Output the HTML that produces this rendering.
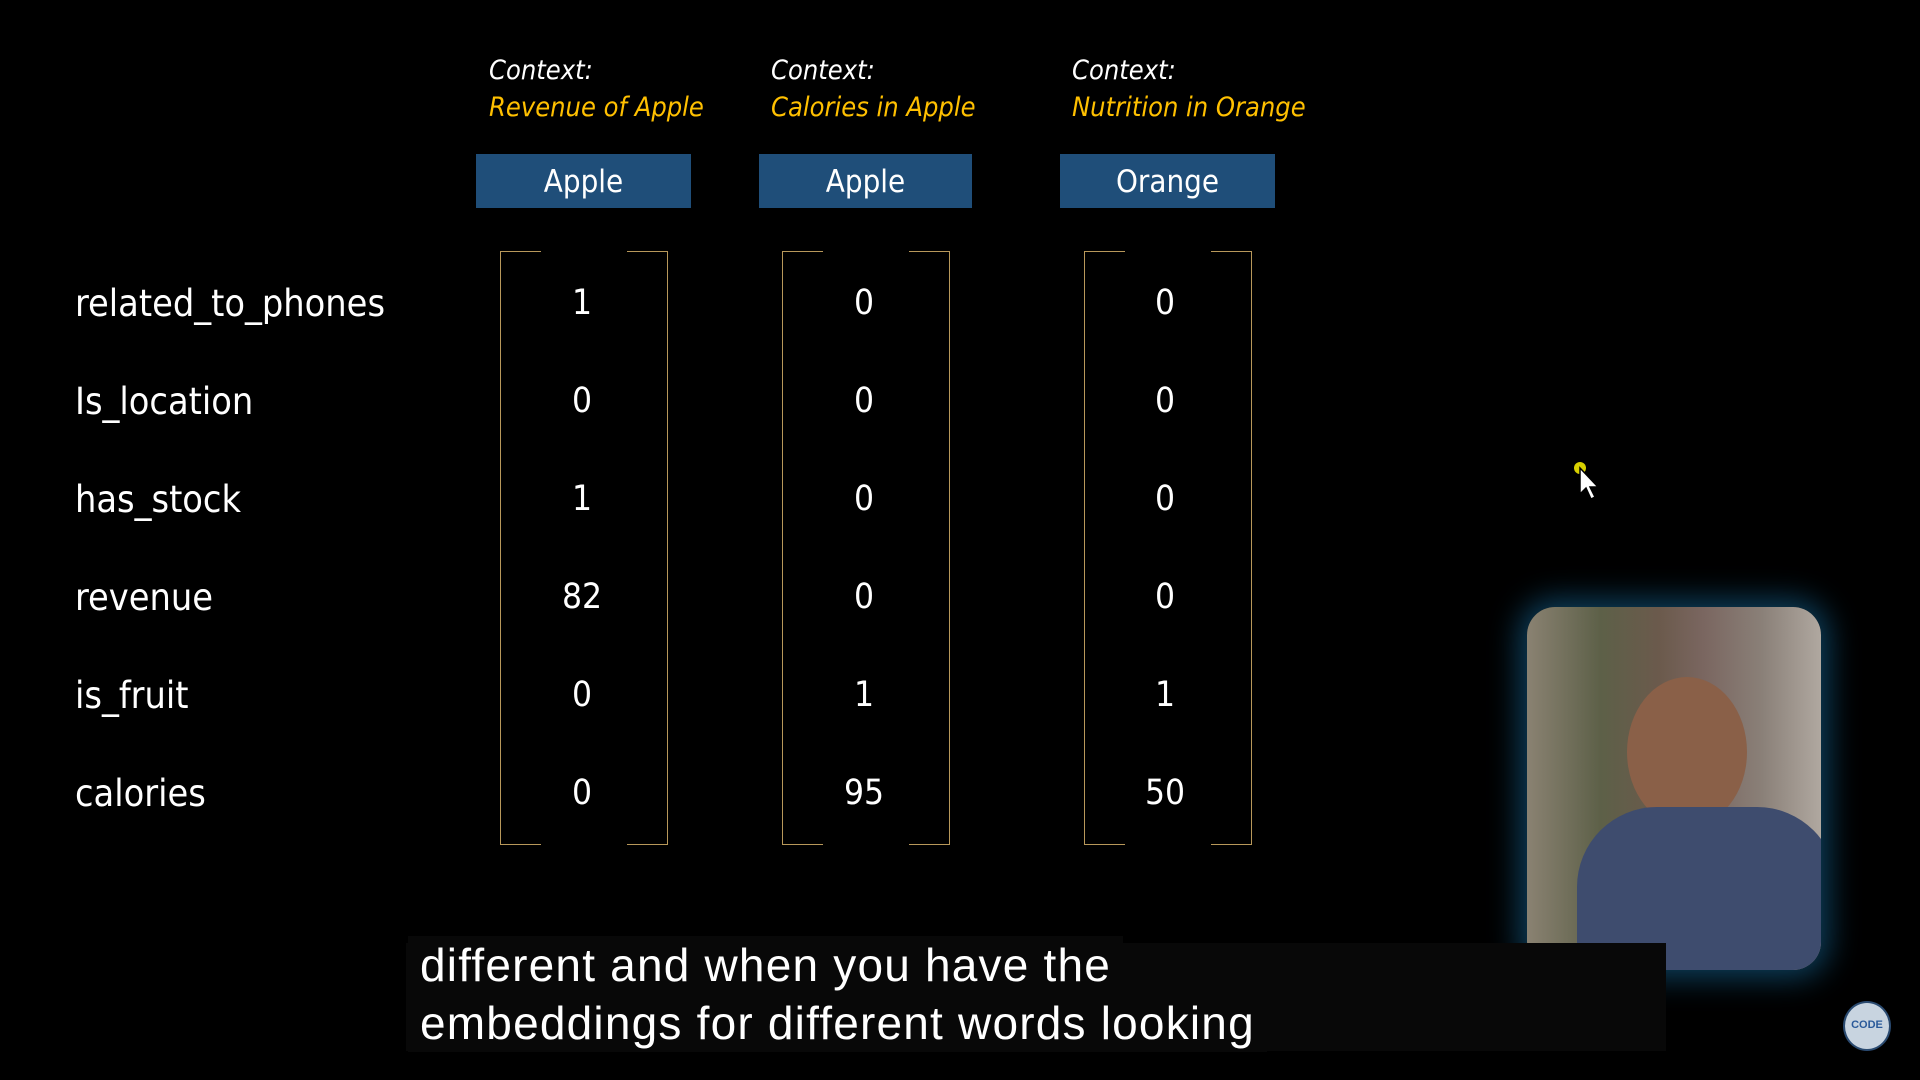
<!DOCTYPE html>
<html><head><meta charset="utf-8"><style>
body{margin:0;width:1920px;height:1080px;background:#000;overflow:hidden;position:relative;font-family:"Liberation Sans",sans-serif;color:#fff}
.a{position:absolute}
.ctx{font-style:italic;font-size:27px;line-height:37px;font-family:"DejaVu Sans Condensed","Liberation Sans",sans-serif}
.ctx span{color:#ffc000}
.box{background:#1f4e79;height:54px;top:154px;font-size:31px;line-height:56px;text-align:center;font-family:"DejaVu Sans Condensed","Liberation Sans",sans-serif}
.lbl{left:75px;font-size:37.5px;font-family:"DejaVu Sans Condensed","Liberation Sans",sans-serif;transform:translateY(-50%)}
.val{font-size:35px;font-family:"DejaVu Sans Condensed","Liberation Sans",sans-serif;transform:translate(-50%,-50%)}
.br{top:251px;height:594px;width:168px;border-left:1.5px solid #b8985a;border-right:1.5px solid #b8985a;box-sizing:border-box}
.br:before,.br:after{content:"";position:absolute;left:0;width:40px;height:0;border-top:1.5px solid #b8985a}
.br:before{top:0}.br:after{bottom:0}
.br i:before,.br i:after{content:"";position:absolute;right:0;width:40px;border-top:1.5px solid #b8985a}
.br i:before{top:0}.br i:after{bottom:0}
.cap{font-size:46px;letter-spacing:1.2px;background:#080808;padding:0 12px;left:408px}
</style></head><body>
<div class="a ctx" style="left:489px;top:52px">Context:<br><span>Revenue of Apple</span></div>
<div class="a ctx" style="left:771px;top:52px">Context:<br><span>Calories in Apple</span></div>
<div class="a ctx" style="left:1072px;top:52px">Context:<br><span>Nutrition in Orange</span></div>
<div class="a box" style="left:476px;width:215px">Apple</div>
<div class="a box" style="left:759px;width:213px">Apple</div>
<div class="a box" style="left:1060px;width:215px">Orange</div>
<div class="a br" style="left:500px"><i></i></div>
<div class="a br" style="left:782px"><i></i></div>
<div class="a br" style="left:1084px"><i></i></div>
<div class="a lbl" style="top:303px">related_to_phones</div>
<div class="a lbl" style="top:401px">Is_location</div>
<div class="a lbl" style="top:499px">has_stock</div>
<div class="a lbl" style="top:597px">revenue</div>
<div class="a lbl" style="top:695px">is_fruit</div>
<div class="a lbl" style="top:793px">calories</div>
<div class="a val" style="left:582px;top:303px">1</div><div class="a val" style="left:864px;top:303px">0</div><div class="a val" style="left:1165px;top:303px">0</div>
<div class="a val" style="left:582px;top:401px">0</div><div class="a val" style="left:864px;top:401px">0</div><div class="a val" style="left:1165px;top:401px">0</div>
<div class="a val" style="left:582px;top:499px">1</div><div class="a val" style="left:864px;top:499px">0</div><div class="a val" style="left:1165px;top:499px">0</div>
<div class="a val" style="left:582px;top:597px">82</div><div class="a val" style="left:864px;top:597px">0</div><div class="a val" style="left:1165px;top:597px">0</div>
<div class="a val" style="left:582px;top:695px">0</div><div class="a val" style="left:864px;top:695px">1</div><div class="a val" style="left:1165px;top:695px">1</div>
<div class="a val" style="left:582px;top:793px">0</div><div class="a val" style="left:864px;top:793px">95</div><div class="a val" style="left:1165px;top:793px">50</div>
<div class="a" style="left:1527px;top:607px;width:294px;height:363px;border-radius:28px;box-shadow:0 0 30px 8px #0d3f5c;background:linear-gradient(90deg,#8a8272 0%,#5d6048 25%,#6b5a4c 45%,#7a6660 60%,#8a8078 80%,#b0a8a0 100%);overflow:hidden">
<div class="a" style="left:100px;top:70px;width:120px;height:150px;border-radius:50%;background:#8a6048"></div>
<div class="a" style="left:50px;top:200px;width:260px;height:180px;border-radius:80px 80px 0 0;background:#3e4c6e"></div>
</div>
<svg class="a" style="left:1572px;top:460px" width="30" height="42"><circle cx="8" cy="8" r="6" fill="#d8d000"/><path d="M8 8 L8 34 L14 28 L19 39 L23 37 L18 27 L26 27 Z" fill="#fff" stroke="#000" stroke-width="1.5"/></svg>
<div class="a" style="left:406px;top:943px;width:1260px;height:108px;background:#080808"></div>
<div class="a cap" style="top:936px;line-height:58px">different and when you have the</div>
<div class="a cap" style="top:994px;line-height:58px">embeddings for different words looking</div>
<div class="a" style="left:1843px;top:1001px;width:44px;height:46px;border-radius:50%;background:#c8d4e0;border:2px solid #2a4a70;font-size:11px;color:#2a5a9a;text-align:center;line-height:44px;font-weight:bold">CODE</div>
</body></html>
